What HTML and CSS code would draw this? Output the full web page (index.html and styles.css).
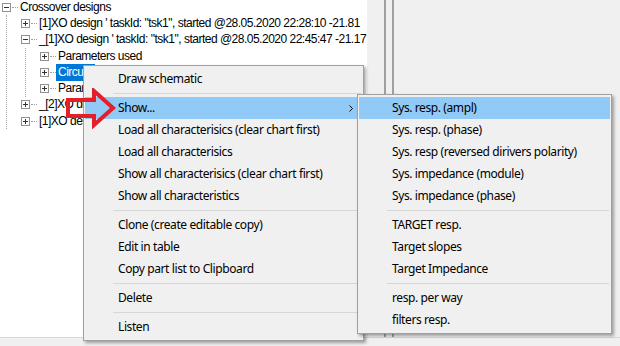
FILE: index.html
```
<!DOCTYPE html>
<html>
<head>
<meta charset="utf-8">
<link rel="stylesheet" href="styles.css">
</head>
<body>
<div class="app">
  <div class="main">
    <div class="tree">
      <div class="row">
        <span class="exp minus"></span><span class="dots"></span><span class="label">Crossover designs</span>
      </div>
      <div class="children">
        <div class="row"><span class="exp plus"></span><span class="dots"></span><span class="label">[1]XO design ' taskId: "tsk1", started @28.05.2020 22:28:10 -21.81</span></div>
        <div class="row"><span class="exp minus"></span><span class="dots"></span><span class="label">_[1]XO design ' taskId: "tsk1", started @28.05.2020 22:45:47 -21.17</span></div>
        <div class="children">
          <div class="row"><span class="exp plus"></span><span class="dots"></span><span class="label">Parameters used</span></div>
          <div class="row"><span class="exp plus"></span><span class="dots"></span><span class="label selected">Circuit</span></div>
          <div class="row"><span class="exp plus"></span><span class="dots"></span><span class="label">Parameters</span></div>
        </div>
        <div class="row"><span class="exp plus"></span><span class="dots"></span><span class="label">_[2]XO design</span></div>
        <div class="row"><span class="exp plus"></span><span class="dots"></span><span class="label">[1]XO design</span></div>
      </div>
    </div>
    <div class="side">
      <div class="edge"></div>
      <div class="split"></div>
      <div class="pane"></div>
    </div>
  </div>
  <div class="bottom"></div>
</div>

<div class="menu main-menu">
  <div class="item">Draw schematic</div>
  <div class="sep"></div>
  <div class="item hot">Show...<svg class="chev" width="4" height="7" viewBox="0 0 4 7"><path d="M0.5 0.5 L3.5 3.5 L0.5 6.5" fill="none" stroke="#000" stroke-width="1"/></svg></div>
  <div class="item">Load all characterisics (clear chart first)</div>
  <div class="item">Load all characterisics</div>
  <div class="item">Show all characterisics (clear chart first)</div>
  <div class="item">Show all characteristics</div>
  <div class="sep"></div>
  <div class="item">Clone (create editable copy)</div>
  <div class="item">Edit in table</div>
  <div class="item">Copy part list to Clipboard</div>
  <div class="sep"></div>
  <div class="item">Delete</div>
  <div class="sep"></div>
  <div class="item">Listen</div>
</div>

<div class="menu sub-menu">
  <div class="item hot">Sys. resp. (ampl)</div>
  <div class="item">Sys. resp. (phase)</div>
  <div class="item">Sys. resp (reversed dirivers polarity)</div>
  <div class="item">Sys. impedance (module)</div>
  <div class="item">Sys. impedance (phase)</div>
  <div class="sep"></div>
  <div class="item">TARGET resp.</div>
  <div class="item">Target slopes</div>
  <div class="item">Target Impedance</div>
  <div class="sep"></div>
  <div class="item">resp. per way</div>
  <div class="item">filters resp.</div>
</div>

<svg class="arrow" width="60" height="44" viewBox="0 0 60 44">
  <polygon points="6,12 32,12 32,3 51,20 32,37 32,28 6,28" fill="none" stroke="#e3202a" stroke-width="4" stroke-linejoin="miter"/>
</svg>
</body>
</html>
```
FILE: styles.css
```
html, body {
  margin: 0;
  padding: 0;
}
body {
  width: 620px;
  height: 346px;
  overflow: hidden;
  background: #f0f0f0;
  position: relative;
  font-family: "Liberation Sans", Arial, sans-serif;
}
.app {
  display: flex;
  flex-direction: column;
  height: 346px;
}
.main {
  display: flex;
  height: 338px;
}
.tree {
  width: 367px;
  background: #fff;
  overflow: hidden;
  font-size: 12px;
  color: #000;
  padding-top: 0;
  margin-top: -1px;
}
.row {
  height: 16.3px;
  display: flex;
  align-items: center;
  white-space: nowrap;
  padding-left: 2px;
}
.exp {
  width: 7px;
  height: 7px;
  border: 1px solid #919191;
  background: #fff;
  position: relative;
  flex: none;
}
.exp::before {
  content: "";
  position: absolute;
  left: 1px;
  top: 3px;
  width: 5px;
  height: 1px;
  background: #333;
}
.exp.plus::after {
  content: "";
  position: absolute;
  left: 3px;
  top: 1px;
  width: 1px;
  height: 5px;
  background: #333;
}
.dots {
  width: 6px;
  margin-left: 1px;
  border-top: 1px dotted #a0a0a0;
  flex: none;
}
.label {
  padding: 1px 2px 2px;
  margin-left: 0;
  letter-spacing: -0.5px;
}
.label.selected {
  background: #0078d7;
  color: #fff;
  padding-right: 6px;
}
.children {
  margin-left: 6px;
  border-left: 1px dotted #a0a0a0;
}
.children .row {
  padding-left: 14px;
}
.children .children {
  margin-left: 18px;
}
.children .children .row {
  padding-left: 14px;
}
.side {
  flex: 1;
  display: flex;
}
.edge {
  width: 17px;
  background: #f0f0f0;
}
.split {
  width: 6px;
  border-left: 2px solid #a0a0a0;
  border-right: 2px solid #a0a0a0;
  background: #f0f0f0;
}
.pane {
  flex: 1;
  background: #f0f0f0;
}
.bottom {
  height: 8px;
  background: #f0f0f0;
  border-top: 1px solid #d8d8d8;
}

.menu {
  position: absolute;
  background: #f0f0f0;
  border: 1px solid #a0a0a0;
  padding: 2px 1px;
  font-family: "Noto Sans", "Segoe UI", sans-serif;
  font-size: 12px;
  letter-spacing: -0.4px;
  color: #000;
  box-shadow: 2px 2px 3px rgba(0, 0, 0, 0.35);
}
.main-menu {
  left: 83px;
  top: 65px;
  width: 277px;
}
.sub-menu {
  left: 357px;
  top: 94px;
  width: 251px;
}
.item {
  height: 22px;
  line-height: 22px;
  padding-left: 33px;
  white-space: nowrap;
  position: relative;
}
.item.hot {
  background: #91c9f7;
}
.chev {
  position: absolute;
  right: 9px;
  top: 8px;
}
.sep {
  height: 7px;
  display: flex;
  align-items: center;
  padding-left: 28px;
}
.sep::before {
  content: "";
  flex: 1;
  height: 1px;
  background: #d7d7d7;
  margin-right: 1px;
}
.arrow {
  position: absolute;
  left: 62px;
  top: 88px;
}
```
